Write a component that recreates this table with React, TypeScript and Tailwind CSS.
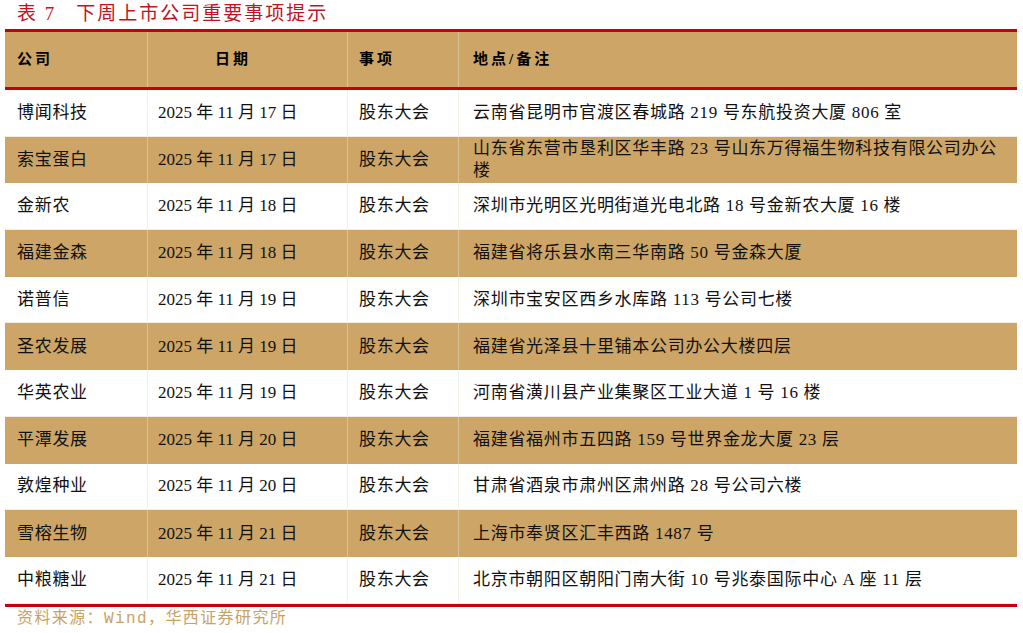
const rows: { company: string; date: string; event: string; place: React.ReactNode }[] = [
  { company: '博闻科技', date: '2025 年 11 月 17 日', event: '股东大会', place: '云南省昆明市官渡区春城路 219 号东航投资大厦 806 室' },
  {
    company: '索宝蛋白',
    date: '2025 年 11 月 17 日',
    event: '股东大会',
    place: (
      <>
        山东省东营市垦利区华丰路 23 号山东万得福生物科技有限公司办公
        <br />楼
      </>
    ),
  },
  { company: '金新农', date: '2025 年 11 月 18 日', event: '股东大会', place: '深圳市光明区光明街道光电北路 18 号金新农大厦 16 楼' },
  { company: '福建金森', date: '2025 年 11 月 18 日', event: '股东大会', place: '福建省将乐县水南三华南路 50 号金森大厦' },
  { company: '诺普信', date: '2025 年 11 月 19 日', event: '股东大会', place: '深圳市宝安区西乡水库路 113 号公司七楼' },
  { company: '圣农发展', date: '2025 年 11 月 19 日', event: '股东大会', place: '福建省光泽县十里铺本公司办公大楼四层' },
  { company: '华英农业', date: '2025 年 11 月 19 日', event: '股东大会', place: '河南省潢川县产业集聚区工业大道 1 号 16 楼' },
  { company: '平潭发展', date: '2025 年 11 月 20 日', event: '股东大会', place: '福建省福州市五四路 159 号世界金龙大厦 23 层' },
  { company: '敦煌种业', date: '2025 年 11 月 20 日', event: '股东大会', place: '甘肃省酒泉市肃州区肃州路 28 号公司六楼' },
  { company: '雪榕生物', date: '2025 年 11 月 21 日', event: '股东大会', place: '上海市奉贤区汇丰西路 1487 号' },
  { company: '中粮糖业', date: '2025 年 11 月 21 日', event: '股东大会', place: '北京市朝阳区朝阳门南大街 10 号兆泰国际中心 A 座 11 层' },
]

const body = { fontFamily: '"Liberation Serif", "Noto Sans CJK SC", serif' }

export default function App() {
  return (
    <div className="w-[1023px] h-[633px] bg-white overflow-hidden">
      {/* Title */}
      <div
        className="h-[29px] pl-[17px] pt-[2px] text-[19px] leading-[24px] text-[#c0141e] tracking-[2px]"
        style={body}
      >
        表 7<span className="inline-block w-[20px]" />下周上市公司重要事项提示
      </div>

      <div className="ml-[5px] w-[1012px]">
        {/* Header */}
        <div className="border-t-[3px] border-b-[3px] border-[#c4000b]">
          <div
            className="grid grid-cols-[142px_200px_111px_559px] h-[55px] bg-[#cda566] text-[15px] font-bold tracking-[3px] text-black"
            style={body}
          >
            <div className="flex items-center pl-[12px]">公司</div>
            <div className="flex items-center pl-[67px] border-l border-[#dcc292]">日期</div>
            <div className="flex items-center pl-[11px] border-l border-[#dcc292]">事项</div>
            <div className="flex items-center pl-[14px] border-l border-[#dcc292]">地点/备注</div>
          </div>
        </div>

        {/* Rows */}
        <div className="border-b-[3px] border-[#c4000b]">
          {rows.map((r, i) => {
            const tan = i % 2 === 1
            const sep = tan ? 'border-l border-[#dcc292]' : 'border-l border-[#f6f0e6]'
            return (
              <div
                key={r.company}
                className={`grid grid-cols-[142px_200px_111px_559px] h-[46.7px] text-[17px] leading-[22px] text-[#111] ${
                  tan ? 'bg-[#cda566]' : 'bg-white border-b border-[#f1ece4]'
                }`}
                style={body}
              >
                <div className="flex items-center pl-[12px] tracking-[0.7px]">{r.company}</div>
                <div className={`flex items-center pl-[10px] whitespace-nowrap ${sep}`}>{r.date}</div>
                <div className={`flex items-center pl-[11px] tracking-[0.7px] ${sep}`}>{r.event}</div>
                <div className={`flex items-center pl-[14px] pr-[2px] tracking-[0.7px] ${sep}`}>
                  <span>{r.place}</span>
                </div>
              </div>
            )
          })}
        </div>
      </div>

      {/* Source */}
      <div
        className="pl-[17px] pt-[2px] text-[16px] leading-[20px] tracking-[1.4px] text-[#c9a263]"
        style={{ fontFamily: '"Liberation Mono", "Noto Sans CJK SC", monospace' }}
      >
        资料来源：Wind，华西证券研究所
      </div>
    </div>
  )
}
